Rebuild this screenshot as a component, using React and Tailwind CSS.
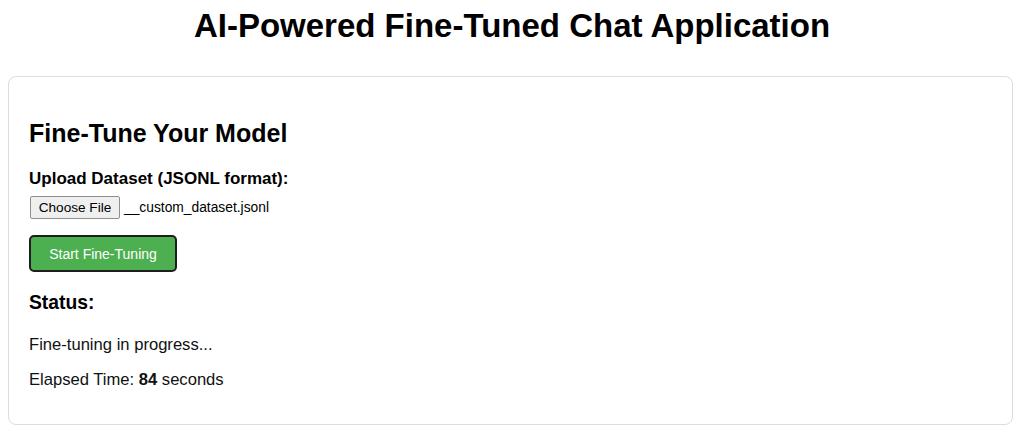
export default function App() {
  return (
    <div className="w-[1024px] h-[435px] bg-white overflow-hidden" style={{ fontFamily: '"Liberation Sans", Arial, sans-serif' }}>
      <h1 className="pt-[7px] text-center text-[33px] leading-[37px] font-bold text-black">
        AI-Powered Fine-Tuned Chat Application
      </h1>
      <div className="mt-[32px] ml-[8px] w-[1005px] border border-[#dddddd] rounded-[8px] pl-[20px] pt-[42px] pb-[35px] text-[#111]">
        <h2 className="text-[25px] leading-[28px] font-bold text-black">Fine-Tune Your Model</h2>
        <div className="mt-[22px] text-[17px] leading-[20px] font-bold text-black">Upload Dataset (JSONL format):</div>
        <div className="mt-[7px] flex items-center h-[23px] text-black">
          <span className="ml-[1px] h-[23px] w-[90px] flex items-center justify-center bg-[#efefef] border border-[#8f8f8f] rounded-[2px] text-[13.6px] leading-[16px]">
            Choose File
          </span>
          <span className="ml-[4px] text-[13.8px] leading-[16px]">__custom_dataset.jsonl</span>
        </div>
        <button className="mt-[16px] h-[37px] w-[148px] bg-[#4caf50] border-2 border-[#1e1e1e] rounded-[5px] text-white text-[14px] leading-[16px] flex items-center justify-center">
          Start Fine-Tuning
        </button>
        <h3 className="mt-[20px] text-[19.3px] leading-[22px] font-bold text-black">Status:</h3>
        <p className="mt-[22px] text-[16.6px] leading-[18px]">Fine-tuning in progress...</p>
        <p className="mt-[17px] text-[16.6px] leading-[18px]">
          Elapsed Time: <strong className="font-bold">84</strong> seconds
        </p>
      </div>
    </div>
  );
}
